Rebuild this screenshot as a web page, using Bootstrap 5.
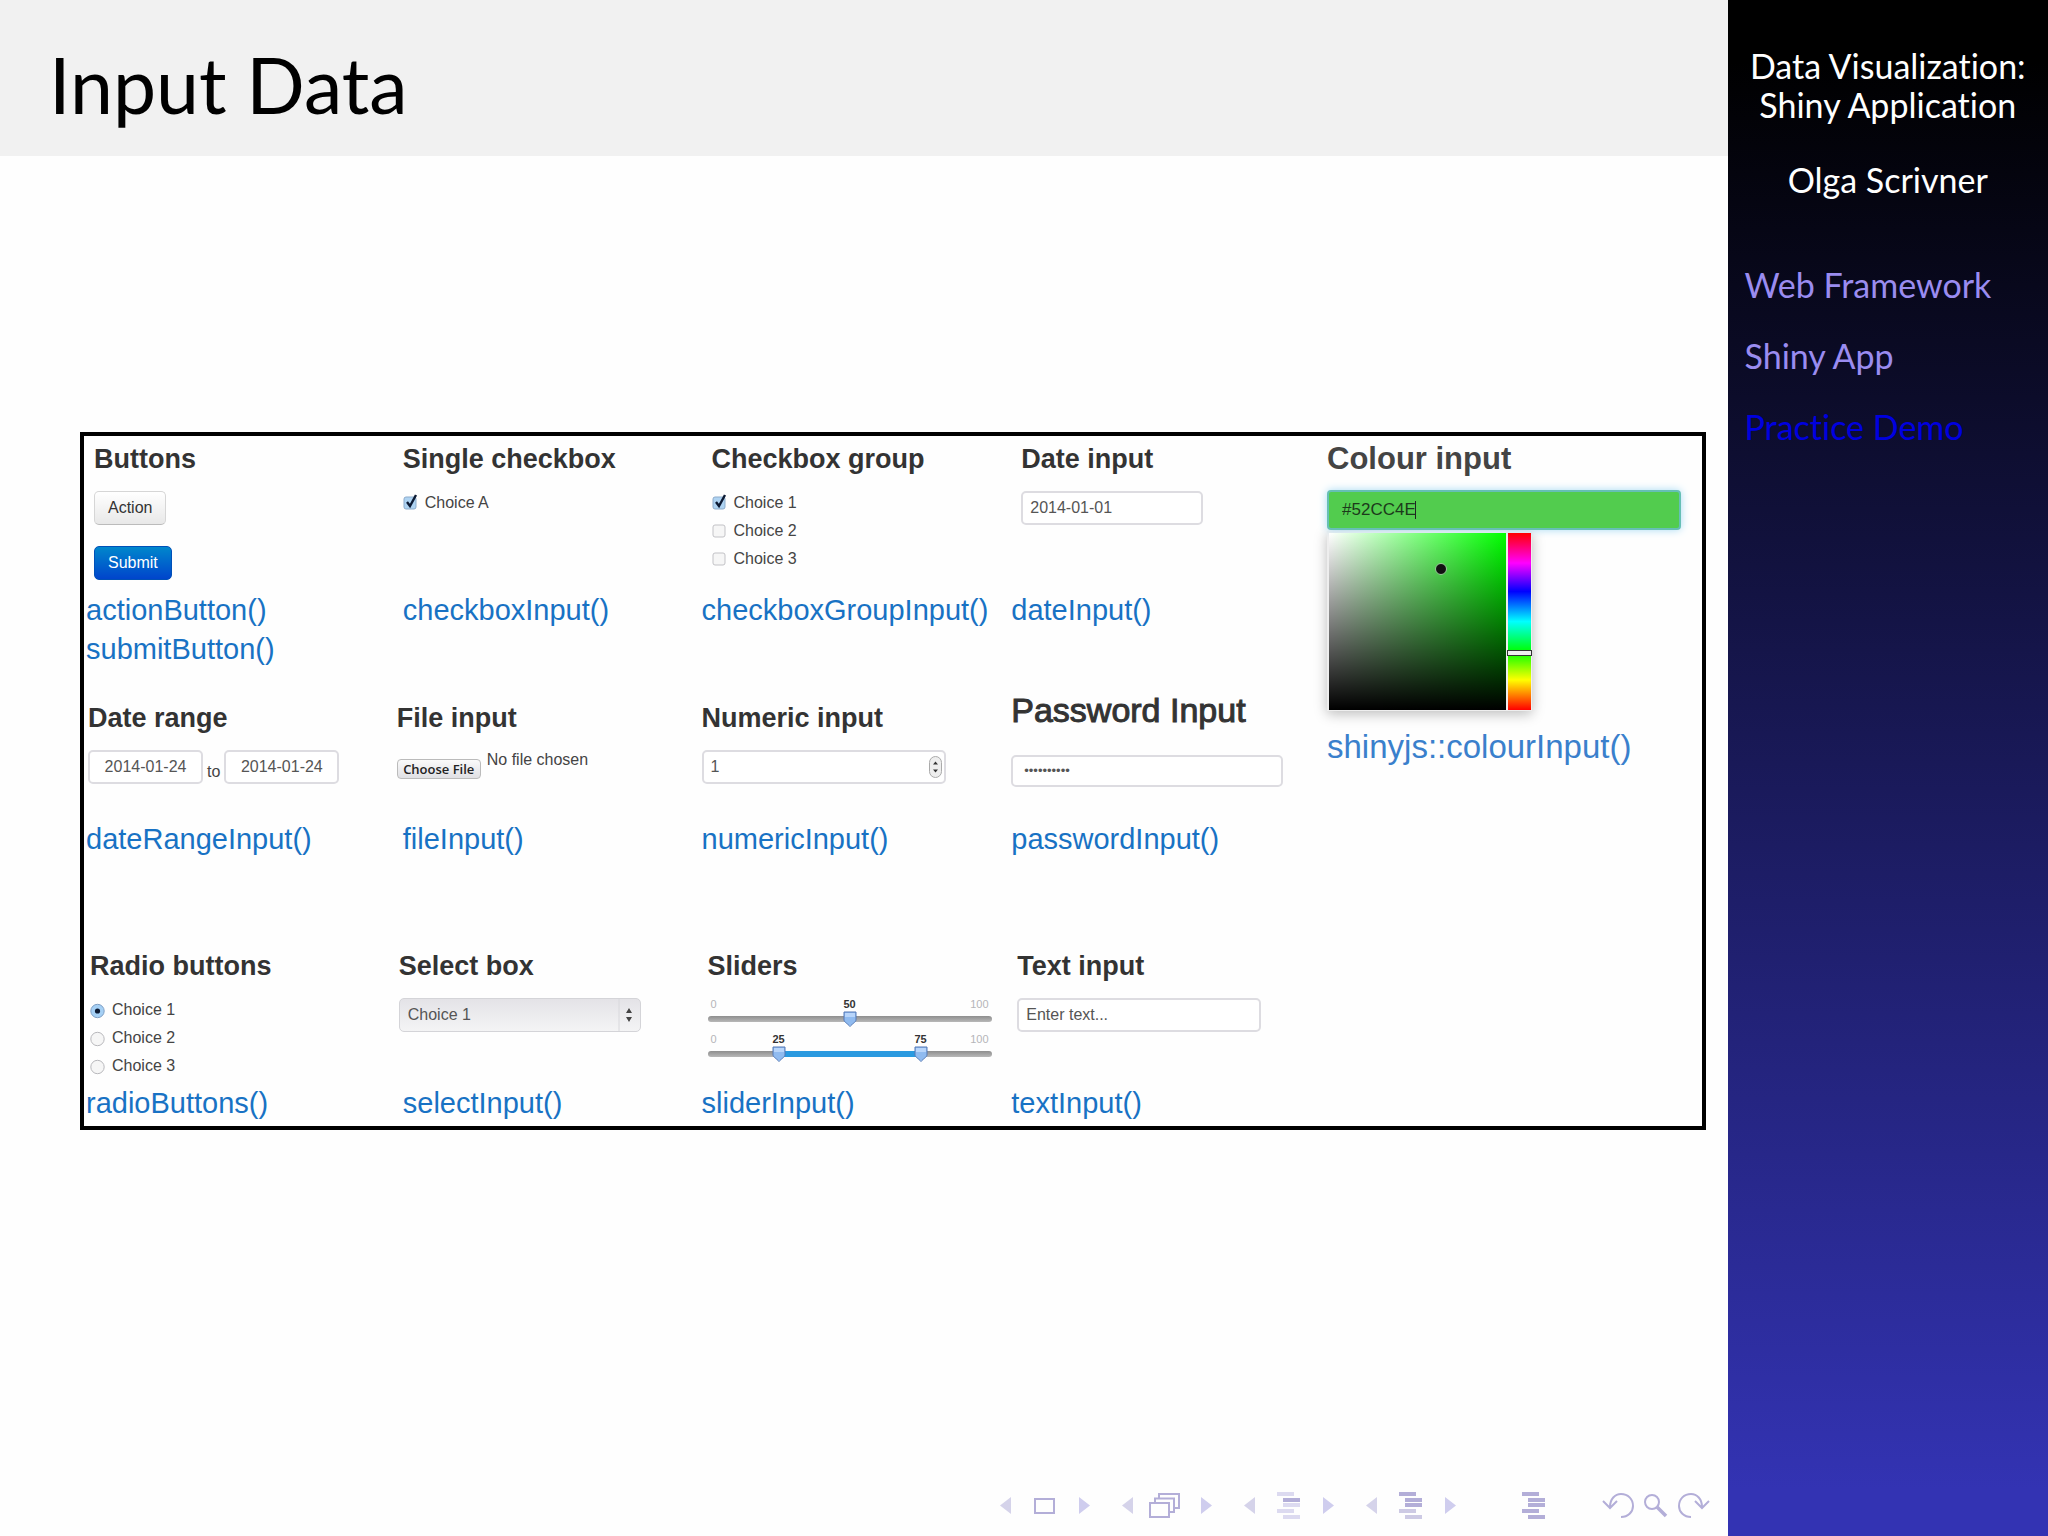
<!DOCTYPE html>
<html lang="en">
<head>
<meta charset="utf-8">
<meta name="viewport" content="width=device-width, initial-scale=1">
<title>Input Data</title>
<link href="https://cdn.jsdelivr.net/npm/bootstrap@5.3.0/dist/css/bootstrap.min.css" rel="stylesheet">
<style>
  body { font-family: Lato, "Open Sans", sans-serif; font-variant-ligatures: none; background: #fefefe; color: #000; }
  .slide-head { background: #f1f1f1; height: 156px; padding: 12px 49px 0; }
  .slide-head h1 { font-size: 77px; line-height: 94px; font-weight: 400; }

  .side { width: 15.65%; padding: 46px 17px; font-size: 34px; line-height: 39px;
    background: linear-gradient(#000 4%, #3333b3 97%); }
  .side a { color: #9a8cf0; }
  .side a.current { color: #0000e0; }
  .side .side-title { margin: 0 -17px; }
  .side .author { margin-top: 36px; margin-bottom: 66px; }
  .side ul { row-gap: 32px; }

  .gallery { margin: auto 22px auto 80px; border: 4px solid #000; padding-top: 8px;
    font-family: "Liberation Sans", Arial, sans-serif; font-size: 16px; line-height: 28px; color: #444; }
  .inputs-grid { flex: 1242 1 0; grid-template-columns: 310fr 310fr 311fr 311fr; }
  .colour-col { flex: 376 1 0; padding-left: 6px; }
  .title-text { display: block; font-size: 27px; line-height: 30px; font-weight: 700; margin: 0 0 17px; color: #333; white-space: nowrap; }
  .title-text.colour-title { font-size: 31px; color: #444; margin-bottom: 16px; }
  .title-text.thin-title { font-size: 34px; line-height: 25px; font-weight: 400; -webkit-text-stroke: 1px #333; margin-top: -5px; margin-bottom: 32px; }
  .fn { display: block; font-size: 29px; line-height: 39px; color: #1872c4; white-space: nowrap; text-decoration: none; }
  .colour-col .fn { font-size: 33px; color: #3a80cc; margin-top: 16px; }
  .indent-a { padding-left: 2px; }
  .indent-b { padding-left: 10px; }
  .band-1 { min-height: 259px; }
  .band-2 { min-height: 248px; }
  .band-3 { min-height: 175px; }
  .demo { display: flow-root; }
  .band-1 .demo { padding-left: 10px; min-height: 147px; }
  .band-2 .demo { padding-left: 4px; min-height: 117px; }
  .band-2 .demo.flush { padding-left: 0; }
  .band-3 .demo { padding-left: 6px; min-height: 133px; }

  .demo .form-control { height: 34px; padding: 0 7px; font-size: 16px; line-height: 32px; color: #555; border: 2px solid #dddce1; border-radius: 5px; background: #fff; }
  .w-date { width: 182px; } .w-range { width: 115px; } .w-wide { width: 244px; }
  .w-pass { width: 272px; }
  .demo .form-control.w-range { text-align: center; padding: 0; }
  .demo .form-control.w-pass { height: 32px; padding: 0 11px; font-size: 13px; }
  .range-sep { padding: 0 4px 4px; }
  .demo .btn { height: 34px; padding: 0 13px; font-size: 16px; line-height: 30px; border-radius: 5px; }
  .btn-stack { row-gap: 21px; }
  .btn-action { background: linear-gradient(#fff, #e8e8e8); border: 1px solid #d6d6d6; border-bottom-color: #bbb; color: #333; }
  .btn-send { background: linear-gradient(#0087cc, #0044cc); border: 1px solid #0050b8; color: #fff; }

  .tick-row { display: flex; align-items: center; height: 28px; column-gap: 7px; }
  .tick-list { margin-top: -2px; }
  .tick-row input { appearance: none; margin: 0; width: 15px; height: 18px; background: center / 15px 18px no-repeat; }
  .tick-row input[type=checkbox] { background-image: url("data:image/svg+xml,%3Csvg xmlns='http://www.w3.org/2000/svg' viewBox='0 0 15 18'%3E%3Crect x='1' y='3' width='12' height='12' rx='2' fill='%23f6f6f6' stroke='%23c2c2c6'/%3E%3C/svg%3E"); }
  .tick-row input[type=checkbox]:checked { background-image: url("data:image/svg+xml,%3Csvg xmlns='http://www.w3.org/2000/svg' viewBox='0 0 15 18'%3E%3Crect x='1' y='3' width='12' height='12' rx='2' fill='%23aed3f2' stroke='%238daccb'/%3E%3Cpath d='M4 8l3 4L13 1' fill='none' stroke='%230c1a33' stroke-width='2.4'/%3E%3C/svg%3E"); }
  .tick-row input[type=radio] { background-image: url("data:image/svg+xml,%3Csvg xmlns='http://www.w3.org/2000/svg' viewBox='0 0 15 18'%3E%3Ccircle cx='7.5' cy='10' r='6.7' fill='%23f6f6f6' stroke='%23b8b8bc'/%3E%3C/svg%3E"); }
  .tick-row input[type=radio]:checked { background-image: url("data:image/svg+xml,%3Csvg xmlns='http://www.w3.org/2000/svg' viewBox='0 0 15 18'%3E%3Ccircle cx='7.5' cy='10' r='6.7' fill='%23a5d0f5' stroke='%237f9fc4'/%3E%3Ccircle cx='7.5' cy='10' r='2.6' fill='%230c1a33'/%3E%3C/svg%3E"); }

  .file-pick { width: 220px; height: 34px; font-size: 16px; line-height: 20px; color: #444; }
  .file-pick::file-selector-button { position: relative; top: 9px; width: 84px; height: 20px; padding: 0; margin: 0 6px 0 0; font: 600 13px/16px "Open Sans", sans-serif; color: #222; border: 1px solid #bbb; border-radius: 4px; background: linear-gradient(#fafafa, #e0e0e4); }
  input[type=number] { appearance: textfield; }
  input[type=number]::-webkit-inner-spin-button { display: none; }
  .stepper { position: absolute; right: 4px; top: 6px; }
  .demo .pick { width: 242px; height: 34px; padding: 0 8px; font-size: 16px; color: #555; border: 1px solid #d4d4d8; border-radius: 5px; appearance: none;
    background: url("data:image/svg+xml,%3Csvg xmlns='http://www.w3.org/2000/svg' viewBox='0 0 22 34'%3E%3Cpath d='M1 0v34' stroke='%23d8d8dc'/%3E%3Cpath d='M8 15l3-5 3 5zM8 19l3 5 3-5z' fill='%23444'/%3E%3C/svg%3E") right center / 22px 34px no-repeat, linear-gradient(#e4e3e7, #f4f4f5); }

  .slider-box { width: 284px; height: 35px; font-size: 11px; line-height: 12px; }
  .slider-ends { color: #b5b5b9; padding: 0 3px; }
  .slider-value { top: 0; transform: translateX(-50%); color: #333; font-weight: 700; }
  .rail { top: 18px; left: 0; right: 0; height: 6px; border-radius: 3px; background: linear-gradient(#8e8e8e, #b8b8b8); }
  .rail-fill { height: 6px; background: #2a9ae0; }
  .slider-box input { position: absolute; top: 12px; left: -8px; width: calc(100% + 16px); height: 18px; margin: 0; appearance: none; background: none; pointer-events: none; }
  .slider-box input::-webkit-slider-thumb { appearance: none; width: 16px; height: 18px; pointer-events: auto;
    background: url("data:image/svg+xml,%3Csvg xmlns='http://www.w3.org/2000/svg' viewBox='0 0 16 18'%3E%3Cpath d='M2 2h12v8c0 2-4 4-6 6.500C6 14 2 12 2 10z' fill='%2390bbf0' stroke='%235479b5'/%3E%3Cpath d='M3 3h10v4H3z' fill='%23b8d5fa'/%3E%3C/svg%3E"); }

  .hex-box { width: 354px; max-width: 96%; }
  .hex { display: block; height: 40px; width: 100%; background: #52cc4e; border: 2px solid #66bfb5; border-radius: 4px; box-shadow: 0 0 8px #a8dcf5; padding: 0 13px; font-size: 17px; color: #1c3a1b; outline: 0; }
  .caret-bar { left: 88px; top: 11px; width: 1px; height: 18px; background: #222; }
  .picker { width: 205px; height: 180px; padding: 2px 1px 1px 2px; column-gap: 2px; background: #eee; box-shadow: 0 3px 12px #bbb; margin-top: 1px; }
  .shade { flex: 1; background: linear-gradient(transparent, #000), linear-gradient(90deg, #fff, #0f0); }
  .hue { width: 23px; background: linear-gradient(#f00, #f0f 17%, #00f 33%, #0ff 50%, #0f0 67%, #ff0 83%, #f00); }
  .shade-dot { width: 12px; height: 12px; border-radius: 6px; background: #111; border: 1px solid #9c9; left: 60%; top: 17%; }
  .hue-bar { height: 6px; left: -1px; right: -1px; top: 66%; border: 1px solid #333; background: #eee; }

  .slide-foot { height: 130px; padding: 0 18px 15px; }
  .slide-foot svg { display: block; }
  .foot-group { column-gap: 17px; margin-right: 32px; }
  .foot-lone { margin-left: 30px; margin-right: 52px; }
  .foot-tools { column-gap: 6px; }
</style>
</head>
<body>
<svg width="0" height="0" class="position-absolute" aria-hidden="true">
  <defs>
    <symbol id="tri-l" viewBox="0 0 12 32"><path d="M11 8v17L0 16.500z" fill="#d5d3ea"/></symbol>
    <symbol id="tri-r" viewBox="0 0 12 32"><path d="M1 8v17l11-8.500z" fill="#cfcdee"/></symbol>
  </defs>
</svg>
<div class="d-flex min-vh-100">
  <main class="d-flex flex-column flex-grow-1">
    <header class="slide-head d-flex align-items-center"><h1 class="m-0">Input Data</h1></header>

    <section class="gallery d-flex">
      <div class="inputs-grid d-grid">
        <div class="band-1">
          <div class="demo"><h2 class="title-text">Buttons</h2>
            <div class="btn-stack d-flex flex-column align-items-start">
              <button type="button" class="btn btn-action">Action</button>
              <button type="submit" class="btn btn-send">Submit</button>
            </div></div>
          <div class="indent-a"><a class="fn" href="#">actionButton()</a><a class="fn" href="#">submitButton()</a></div>
        </div>
        <div class="band-1">
          <div class="demo"><h2 class="title-text">Single checkbox</h2>
            <div class="tick-list"><label class="tick-row"><input type="checkbox" checked>Choice A</label></div></div>
          <a class="fn indent-b" href="#">checkboxInput()</a>
        </div>
        <div class="band-1">
          <div class="demo"><h2 class="title-text">Checkbox group</h2>
            <div class="tick-list">
              <label class="tick-row"><input type="checkbox" checked>Choice 1</label>
              <label class="tick-row"><input type="checkbox">Choice 2</label>
              <label class="tick-row"><input type="checkbox">Choice 3</label>
            </div></div>
          <a class="fn" href="#">checkboxGroupInput()</a>
        </div>
        <div class="band-1">
          <div class="demo"><label class="title-text" for="date">Date input</label>
            <input id="date" type="text" class="form-control w-date" value="2014-01-01"></div>
          <a class="fn" href="#">dateInput()</a>
        </div>

        <div class="band-2">
          <div class="demo"><label class="title-text" for="from">Date range</label>
            <div class="d-flex align-items-end">
              <input id="from" type="text" class="form-control w-range" value="2014-01-24">
              <label for="until" class="range-sep lh-1">to</label>
              <input id="until" type="text" class="form-control w-range" value="2014-01-24">
            </div></div>
          <a class="fn indent-a" href="#">dateRangeInput()</a>
        </div>
        <div class="band-2">
          <div class="demo"><label class="title-text" for="file">File input</label>
            <input id="file" type="file" class="file-pick d-block"></div>
          <a class="fn indent-b" href="#">fileInput()</a>
        </div>
        <div class="band-2">
          <div class="demo flush"><label class="title-text" for="num">Numeric input</label>
            <div class="position-relative w-wide">
              <input id="num" type="number" class="form-control" value="1">
              <svg class="stepper" width="13" height="22" viewBox="0 0 13 22" aria-hidden="true"><rect x=".5" y=".5" width="12" height="21" rx="6" fill="#eee" stroke="#aaa"/><path d="M4 8.500l2.500-3 2.500 3zM4 13.500l2.500 3 2.500-3z" fill="#333"/></svg>
            </div></div>
          <a class="fn" href="#">numericInput()</a>
        </div>
        <div class="band-2">
          <div class="demo flush"><label class="title-text thin-title" for="pass">Password Input</label>
            <input id="pass" type="password" class="form-control w-pass" value="abcdefghij"></div>
          <a class="fn" href="#">passwordInput()</a>
        </div>

        <div class="band-3">
          <div class="demo"><h2 class="title-text">Radio buttons</h2>
            <div class="tick-list">
              <label class="tick-row"><input type="radio" name="r" checked>Choice 1</label>
              <label class="tick-row"><input type="radio" name="r">Choice 2</label>
              <label class="tick-row"><input type="radio" name="r">Choice 3</label>
            </div></div>
          <a class="fn indent-a" href="#">radioButtons()</a>
        </div>
        <div class="band-3">
          <div class="demo"><label class="title-text" for="sel">Select box</label>
            <select id="sel" class="pick"><option>Choice 1</option><option>Choice 2</option></select></div>
          <a class="fn indent-b" href="#">selectInput()</a>
        </div>
        <div class="band-3">
          <div class="demo"><h2 class="title-text">Sliders</h2>
            <div class="slider-box position-relative">
              <div class="slider-ends d-flex justify-content-between"><span>0</span><span>100</span></div>
              <span class="slider-value position-absolute" style="left:50%">50</span>
              <div class="rail position-absolute"></div>
              <input type="range" aria-label="Value" value="50">
            </div>
            <div class="slider-box position-relative">
              <div class="slider-ends d-flex justify-content-between"><span>0</span><span>100</span></div>
              <span class="slider-value position-absolute" style="left:25%">25</span>
              <span class="slider-value position-absolute" style="left:75%">75</span>
              <div class="rail position-absolute"><div class="rail-fill" style="margin-left:25%;width:50%"></div></div>
              <input type="range" aria-label="Lower" value="25">
              <input type="range" aria-label="Upper" value="75">
            </div></div>
          <a class="fn" href="#">sliderInput()</a>
        </div>
        <div class="band-3">
          <div class="demo"><label class="title-text" for="txt">Text input</label>
            <input id="txt" type="text" class="form-control w-wide" value="Enter text..."></div>
          <a class="fn" href="#">textInput()</a>
        </div>
      </div>

      <div class="colour-col">
        <label class="title-text colour-title" for="hex">Colour input</label>
        <div class="hex-box position-relative">
          <input id="hex" class="hex" type="text" value="#52CC4E">
          <span class="caret-bar position-absolute"></span>
        </div>
        <div class="picker d-flex">
          <div class="shade position-relative"><span class="shade-dot position-absolute"></span></div>
          <div class="hue position-relative"><span class="hue-bar position-absolute"></span></div>
        </div>
        <a class="fn" href="#">shinyjs::colourInput()</a>
      </div>
    </section>

    <nav class="slide-foot d-flex justify-content-end align-items-end" aria-label="Slide navigation">
      <div class="foot-group d-flex">
        <a href="#" aria-label="Previous slide"><svg width="12" height="32"><use href="#tri-l"/></svg></a>
        <a href="#" aria-label="Slide"><svg width="32" height="32" fill="none" stroke="#b3aed8" stroke-width="2"><path d="M6 10h19v14H6z"/></svg></a>
        <a href="#" aria-label="Next slide"><svg width="12" height="32"><use href="#tri-r"/></svg></a>
      </div>
      <div class="foot-group d-flex">
        <a href="#" aria-label="Previous frame"><svg width="12" height="32"><use href="#tri-l"/></svg></a>
        <a href="#" aria-label="Frame"><svg width="32" height="32" overflow="visible" fill="none" stroke="#b3aed8" stroke-width="2"><path d="M-1 14h19v14H-1zM4 14V9.500h19V23h-5M8 9.500V5h20v14h-5"/></svg></a>
        <a href="#" aria-label="Next frame"><svg width="12" height="32"><use href="#tri-r"/></svg></a>
      </div>
      <div class="foot-group d-flex">
        <a href="#" aria-label="Previous subsection"><svg width="12" height="32"><use href="#tri-l"/></svg></a>
        <a href="#" aria-label="Subsection"><svg width="32" height="32" fill="none" stroke-width="4"><path d="M4 5h17M10 16h17M4 22h17M10 28h17" stroke="#dcdaf0"/><path d="M10 11h17" stroke="#b3aed8"/></svg></a>
        <a href="#" aria-label="Next subsection"><svg width="12" height="32"><use href="#tri-r"/></svg></a>
      </div>
      <div class="foot-group d-flex">
        <a href="#" aria-label="Previous section"><svg width="12" height="32"><use href="#tri-l"/></svg></a>
        <a href="#" aria-label="Section"><svg width="32" height="32" fill="none" stroke-width="4"><path d="M4 5h17M10 11h17M10 16h17" stroke="#b3aed8"/><path d="M4 22h17M10 28h17" stroke="#cdcae4"/></svg></a>
        <a href="#" aria-label="Next section"><svg width="12" height="32"><use href="#tri-r"/></svg></a>
      </div>
      <a href="#" class="foot-lone" aria-label="Presentation"><svg width="32" height="32" fill="none" stroke="#b3aed8" stroke-width="4"><path d="M4 5h17M10 11h17M10 16h17M4 22h17M10 28h17"/></svg></a>
      <div class="foot-tools d-flex">
        <a href="#" aria-label="Back"><svg width="32" height="32" fill="none" stroke="#b3aed8" stroke-width="2"><path d="M1 12l7 7 7-7M8 18C8 10 13 5 19 5c7 0 12 5 12 12 0 6-5 11-12 11"/></svg></a>
        <a href="#" aria-label="Search"><svg width="32" height="32" fill="none" stroke="#b3aed8"><circle cx="12" cy="13" r="7" stroke-width="2"/><path d="M17 18l9 9" stroke-width="3.500"/></svg></a>
        <a href="#" aria-label="Forward"><svg width="32" height="32" fill="none" stroke="#b3aed8" stroke-width="2"><path d="M17 12l7 7 7-7M24 18C24 10 19 5 13 5 6 5 1 10 1 17c0 6 5 11 12 11"/></svg></a>
      </div>
    </nav>
  </main>

  <aside class="side flex-shrink-0">
    <div class="side-title text-white text-center text-nowrap">Data Visualization:<br>Shiny Application</div>
    <div class="author text-white text-center">Olga Scrivner</div>
    <ul class="list-unstyled d-flex flex-column m-0">
      <li><a class="text-decoration-none" href="#">Web Framework</a></li>
      <li><a class="text-decoration-none" href="#">Shiny App</a></li>
      <li><a class="text-decoration-none current" href="#" aria-current="page">Practice Demo</a></li>
    </ul>
  </aside>
</div>
<script src="https://cdn.jsdelivr.net/npm/bootstrap@5.3.0/dist/js/bootstrap.bundle.min.js"></script>
</body>
</html>
